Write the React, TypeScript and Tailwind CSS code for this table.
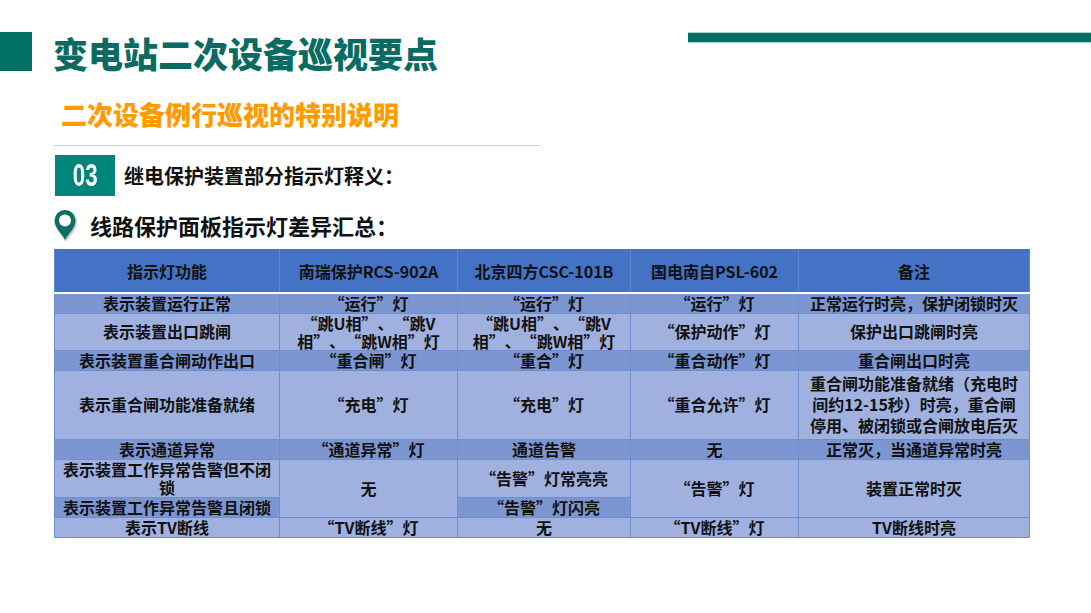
import React from "react";

const DARK = "bg-[#7C96D2]";
const LIGHT = "bg-[#A0B1DF]";

function Q({ s }: { s: string }) {
  const parts: React.ReactNode[] = [];
  let buf = "";
  let k = 0;
  for (const ch of s) {
    if (ch === "“" || ch === "”") {
      if (buf) parts.push(buf);
      buf = "";
      parts.push(
        <span
          key={k++}
          className={`inline-block w-[1em] ${ch === "“" ? "text-right" : "text-left"}`}
        >
          {ch}
        </span>
      );
    } else buf += ch;
  }
  if (buf) parts.push(buf);
  return <>{parts}</>;
}

function Lines({ ls, lh }: { ls: string[]; lh: string }) {
  return (
    <span className={`block ${lh}`}>
      {ls.map((l, i) => (
        <React.Fragment key={i}>
          {i > 0 && <br />}
          <Q s={l} />
        </React.Fragment>
      ))}
    </span>
  );
}

function Pin() {
  return (
    <svg width="28" height="34" viewBox="0 0 28 34">
      <defs>
        <filter id="sh" x="-30%" y="-30%" width="160%" height="160%">
          <feDropShadow dx="1" dy="1.5" stdDeviation="1.2" floodColor="#000" floodOpacity="0.35" />
        </filter>
      </defs>
      <path
        d="M14 32 C11 25.5 3.5 20 3.5 12.5 A10.5 10.5 0 0 1 24.5 12.5 C24.5 20 17 25.5 14 32 Z"
        fill="#0E6E66"
        filter="url(#sh)"
      />
      <circle cx="14" cy="12.5" r="6" fill="#ffffff" />
    </svg>
  );
}

type Cell = { t: React.ReactNode; c: string; rs?: number };

export default function App() {
  const cellBase =
    "border border-[#6E8ED4] text-center align-middle p-0 font-bold text-[16px] leading-[19px] text-[#111]";
  const q = (s: string) => <Q s={s} />;
  const rows: { h: string; cells: Cell[] }[] = [
    {
      h: "h-[20px]",
      cells: [
        { t: "表示装置运行正常", c: DARK },
        { t: q("“运行”灯"), c: DARK },
        { t: q("“运行”灯"), c: DARK },
        { t: q("“运行”灯"), c: DARK },
        { t: "正常运行时亮，保护闭锁时灭", c: DARK },
      ],
    },
    {
      h: "h-[37px]",
      cells: [
        { t: "表示装置出口跳闸", c: LIGHT },
        { t: <Lines ls={["“跳U相”、“跳V", "相”、“跳W相”灯"]} lh="leading-[18px]" />, c: LIGHT },
        { t: <Lines ls={["“跳U相”、“跳V", "相”、“跳W相”灯"]} lh="leading-[18px]" />, c: LIGHT },
        { t: q("“保护动作”灯"), c: LIGHT },
        { t: "保护出口跳闸时亮", c: LIGHT },
      ],
    },
    {
      h: "h-[20px]",
      cells: [
        { t: "表示装置重合闸动作出口", c: DARK },
        { t: q("“重合闸”灯"), c: DARK },
        { t: q("“重合”灯"), c: DARK },
        { t: q("“重合动作”灯"), c: DARK },
        { t: "重合闸出口时亮", c: DARK },
      ],
    },
    {
      h: "h-[69px]",
      cells: [
        { t: "表示重合闸功能准备就绪", c: LIGHT },
        { t: q("“充电”灯"), c: LIGHT },
        { t: q("“充电”灯"), c: LIGHT },
        { t: q("“重合允许”灯"), c: LIGHT },
        {
          t: (
            <Lines
              ls={["重合闸功能准备就绪（充电时", "间约12-15秒）时亮，重合闸", "停用、被闭锁或合闸放电后灭"]}
              lh="leading-[21px]"
            />
          ),
          c: LIGHT,
        },
      ],
    },
    {
      h: "h-[20px]",
      cells: [
        { t: "表示通道异常", c: DARK },
        { t: q("“通道异常”灯"), c: DARK },
        { t: "通道告警", c: DARK },
        { t: "无", c: DARK },
        { t: "正常灭，当通道异常时亮", c: DARK },
      ],
    },
    {
      h: "h-[38px]",
      cells: [
        { t: <Lines ls={["表示装置工作异常告警但不闭", "锁"]} lh="leading-[18px]" />, c: LIGHT },
        { t: "无", c: LIGHT, rs: 2 },
        { t: q("“告警”灯常亮亮"), c: LIGHT },
        { t: q("“告警”灯"), c: LIGHT, rs: 2 },
        { t: "装置正常时灭", c: LIGHT, rs: 2 },
      ],
    },
    {
      h: "h-[20px]",
      cells: [
        { t: "表示装置工作异常告警且闭锁", c: DARK },
        { t: q("“告警”灯闪亮"), c: DARK },
      ],
    },
    {
      h: "h-[19px]",
      cells: [
        { t: "表示TV断线", c: LIGHT },
        { t: q("“TV断线”灯"), c: LIGHT },
        { t: "无", c: LIGHT },
        { t: q("“TV断线”灯"), c: LIGHT },
        { t: "TV断线时亮", c: LIGHT },
      ],
    },
  ];

  const headers = ["指示灯功能", "南瑞保护RCS-902A", "北京四方CSC-101B", "国电南自PSL-602", "备注"];

  return (
    <div
      lang="zh-CN"
      className="relative w-[1091px] h-[613px] overflow-hidden bg-white pt-[32px]"
      style={{ fontFamily: '"Noto Sans CJK SC", "Noto Sans", sans-serif' }}
    >
      {/* title row */}
      <div className="flex items-start h-[39px]">
        <div className="w-[32px] h-[39px] bg-[#007066]" />
        <div className="ml-[21px] mt-[1px] text-[35px] leading-[40px] font-black text-[#0A6B62]">
          变电站二次设备巡视要点
        </div>
        <div className="flex-1" />
        <div className="w-[403px] h-[11px] bg-[#007066] border-y border-[#A8D4D0]" />
      </div>

      {/* subtitle */}
      <div className="pl-[61px] mt-[28px] text-[26px] leading-[30px] font-black text-[#FF9A00]">
        二次设备例行巡视的特别说明
      </div>

      {/* divider */}
      <div className="ml-[53px] mt-[16px] w-[488px] h-px bg-[#D2D2D2]" />

      {/* 03 section */}
      <div className="flex items-center ml-[55px] mt-[9px]">
        <div className="w-[60px] h-[41px] bg-[#00857B] flex items-center justify-center">
          <span
            className="text-white font-bold text-[31px] leading-none scale-x-[0.72] inline-block"
            style={{ fontFamily: '"Liberation Sans", Arial, sans-serif' }}
          >
            03
          </span>
        </div>
        <div className="ml-[9px] text-[20px] font-bold text-[#111] leading-[24px]">
          继电保护装置部分指示灯释义：
        </div>
      </div>

      {/* pin row */}
      <div className="flex items-center ml-[51px] mt-[12px] h-[34px]">
        <Pin />
        <div className="ml-[11px] text-[22px] font-bold text-[#111] leading-[26px]">
          线路保护面板指示灯差异汇总：
        </div>
      </div>

      {/* table */}
      <table className="ml-[54px] mt-[7px] w-[975px] table-fixed border-collapse">
        <colgroup>
          <col className="w-[225px]" />
          <col className="w-[178px]" />
          <col className="w-[173px]" />
          <col className="w-[168px]" />
          <col className="w-[231px]" />
        </colgroup>
        <thead>
          <tr className="h-[43px]">
            {headers.map((h, i) => (
              <th
                key={i}
                className="bg-[#4472C4] border-x border-[#5F86CE] border-t border-t-[#4472C4] border-b-2 border-b-white text-center align-middle p-0 font-bold text-[16px] leading-[20px] text-[#111]"
              >
                {h}
              </th>
            ))}
          </tr>
        </thead>
        <tbody>
          {rows.map((r, ri) => (
            <tr key={ri} className={r.h}>
              {r.cells.map((c, ci) => (
                <td key={ci} rowSpan={c.rs} className={`${cellBase} ${c.c}`}>
                  {c.t}
                </td>
              ))}
            </tr>
          ))}
        </tbody>
      </table>
    </div>
  );
}
